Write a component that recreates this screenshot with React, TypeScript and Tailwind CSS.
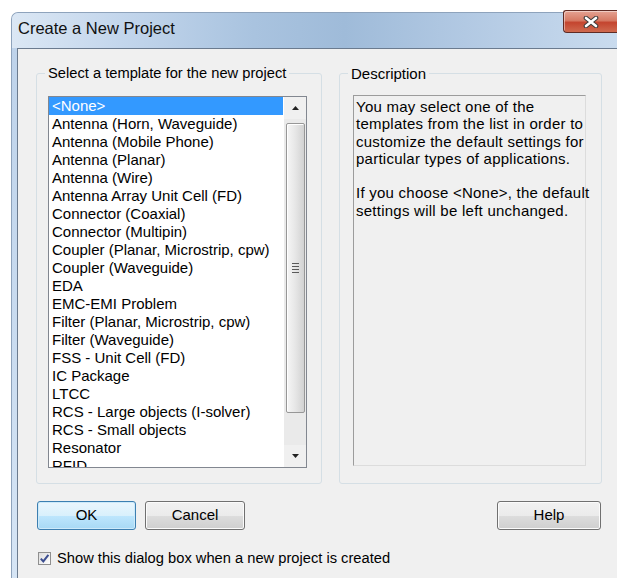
const templates = [
  "<None>",
  "Antenna (Horn, Waveguide)",
  "Antenna (Mobile Phone)",
  "Antenna (Planar)",
  "Antenna (Wire)",
  "Antenna Array Unit Cell (FD)",
  "Connector (Coaxial)",
  "Connector (Multipin)",
  "Coupler (Planar, Microstrip, cpw)",
  "Coupler (Waveguide)",
  "EDA",
  "EMC-EMI Problem",
  "Filter (Planar, Microstrip, cpw)",
  "Filter (Waveguide)",
  "FSS - Unit Cell (FD)",
  "IC Package",
  "LTCC",
  "RCS - Large objects (I-solver)",
  "RCS - Small objects",
  "Resonator",
  "RFID",
];

function CloseButton() {
  return (
    <div className="-mt-[3px] flex h-[23px] w-[54px] items-center justify-center rounded-bl-[4px] rounded-tl-[3px] border border-r-0 border-[#5f2b24] bg-[linear-gradient(180deg,#e5a393_0%,#d67a64_45%,#c4452f_55%,#cf6a4f_100%)] shadow-[inset_1px_1px_0_rgba(255,255,255,0.45)]">
      <svg width="16" height="12" viewBox="0 0 16 12">
        <path d="M3 2L13 10M13 2L3 10" stroke="#3b3b3b" strokeWidth="4.6" strokeLinecap="round" />
        <path d="M3 2L13 10M13 2L3 10" stroke="#ffffff" strokeWidth="2.6" strokeLinecap="round" />
      </svg>
    </div>
  );
}

function Scrollbar() {
  return (
    <div className="flex w-[22px] flex-col bg-[#f0f0f0]">
      <div className="flex h-[22px] items-center justify-center">
        <svg width="7" height="4" viewBox="0 0 7 4">
          <path d="M3.5 0L7 4H0z" fill="#222" />
        </svg>
      </div>
      <div className="flex flex-1 flex-col items-center bg-[#eaeaea] pt-[4px]">
        <div className="flex h-[290px] w-[19px] items-center justify-center rounded-[2px] border border-[#979797] bg-[linear-gradient(90deg,#f6f6f6_0%,#e6e6e6_50%,#d2d2d2_100%)] shadow-[inset_1px_1px_0_#ffffff]">
          <div className="flex w-[7px] flex-col gap-[2px]">
            <div className="h-px bg-[#5a5a5a]" />
            <div className="h-px bg-[#5a5a5a]" />
            <div className="h-px bg-[#5a5a5a]" />
            <div className="h-px bg-[#5a5a5a]" />
          </div>
        </div>
      </div>
      <div className="flex h-[22px] items-center justify-center">
        <svg width="7" height="4" viewBox="0 0 7 4">
          <path d="M0 0H7L3.5 4z" fill="#222" />
        </svg>
      </div>
    </div>
  );
}

function DialogButton({ label, primary, width }: { label: string; primary?: boolean; width: string }) {
  return (
    <button
      className={
        primary
          ? `${width} h-[29px] rounded-[3px] border border-[#3c7fb1] bg-[linear-gradient(180deg,#eaf6fd_0%,#d9f0fc_50%,#bee6fd_51%,#a7d9f5_100%)] text-[15px] text-black shadow-[inset_0_0_0_1px_#cdeafa]`
          : `${width} h-[29px] rounded-[3px] border border-[#707070] bg-[linear-gradient(180deg,#f2f2f2_0%,#ebebeb_50%,#dddddd_51%,#cfcfcf_100%)] text-[15px] text-black shadow-[inset_0_0_0_1px_#fbfbfb]`
      }
    >
      {label}
    </button>
  );
}

export default function App() {
  return (
    <div className="h-[578px] w-[617px] overflow-hidden bg-white pl-[11px] pt-[12px] font-['Liberation_Sans',Arial,sans-serif]">
      <div className="flex h-full w-full flex-col rounded-tl-[7px] border-l border-t border-[#8ea3bc] bg-[linear-gradient(180deg,#bdd2ea_0%,#cadcf0_60%,#d6e5f5_100%)]">
        {/* title bar */}
        <div className="flex h-[35px] items-start justify-between rounded-tl-[6px] bg-[linear-gradient(90deg,#dbe7f4_0%,#c3d6ec_18%,#a9c3df_40%,#9fbbd9_55%,#b2c9e3_75%,#c9dbee_100%)]">
          <span className="pl-[6px] pt-[5px] text-[16.5px] leading-[20px] text-[#111]">Create a New Project</span>
          <CloseButton />
        </div>

        {/* client area */}
        <div className="ml-[5px] flex flex-1 flex-col border-l border-t border-[#6b7b8f] bg-[#f0f0f0] pl-[18px] pt-[16px] text-[15px] text-black">
          <div className="flex gap-[17px]">
            <fieldset className="h-[419px] w-[286px] rounded-[3px] border border-[#d5dfe5] pl-[8px]">
              <legend className="px-[3px] text-[14.7px] leading-[17px]">Select a template for the new project</legend>
              <div className="ml-[3px] mt-[14px] flex h-[372px] w-[259px] border border-[#828790] bg-white">
                <div className="flex flex-1 flex-col overflow-hidden">
                  {templates.map((t, i) => (
                    <div
                      key={t}
                      className={
                        i === 0
                          ? "mr-[1px] h-[18px] shrink-0 bg-[#3399ff] pl-[3px] leading-[18px] whitespace-nowrap text-white"
                          : "h-[18px] shrink-0 pl-[3px] leading-[18px] whitespace-nowrap"
                      }
                    >
                      {t}
                    </div>
                  ))}
                </div>
                <Scrollbar />
              </div>
            </fieldset>

            <fieldset className="h-[419px] w-[263px] rounded-[3px] border border-[#d5dfe5] pl-[8px]">
              <legend className="px-[3px] leading-[17px]">Description</legend>
              <div className="ml-[5px] mt-[13px] h-[371px] w-[233px] border border-b-[#dcdcdc] border-l-[#9c9c9c] border-r-[#dcdcdc] border-t-[#9c9c9c] pl-[2px] pt-[2px] text-[15px] leading-[17.3px] tracking-[0.25px] whitespace-nowrap">
                <p>
                  You may select one of the
                  <br />
                  templates from the list in order to
                  <br />
                  customize the default settings for
                  <br />
                  particular types of applications.
                </p>
                <p className="mt-[17.3px]">
                  If you choose &lt;None&gt;, the default
                  <br />
                  settings will be left unchanged.
                </p>
              </div>
            </fieldset>
          </div>

          <div className="ml-[1px] mt-[17px] flex w-[564px] items-center gap-[9px]">
            <DialogButton label="OK" primary width="w-[99px]" />
            <DialogButton label="Cancel" width="w-[100px]" />
            <div className="ml-auto">
              <DialogButton label="Help" width="w-[104px]" />
            </div>
          </div>

          <label className="ml-[2px] mt-[20px] flex items-center gap-[6px]">
            <span className="flex h-[13px] w-[13px] items-center justify-center border border-[#8f8f8f] bg-[linear-gradient(135deg,#dcdcdc_0%,#ffffff_100%)]">
              <svg width="11" height="11" viewBox="0 0 11 11">
                <path d="M1.8 5.6L4.3 8.4L9.4 1.8" stroke="#3c4e90" strokeWidth="2" fill="none" />
              </svg>
            </span>
            <span className="text-[14.7px] leading-[17px]">Show this dialog box when a new project is created</span>
          </label>
        </div>
      </div>
    </div>
  );
}
